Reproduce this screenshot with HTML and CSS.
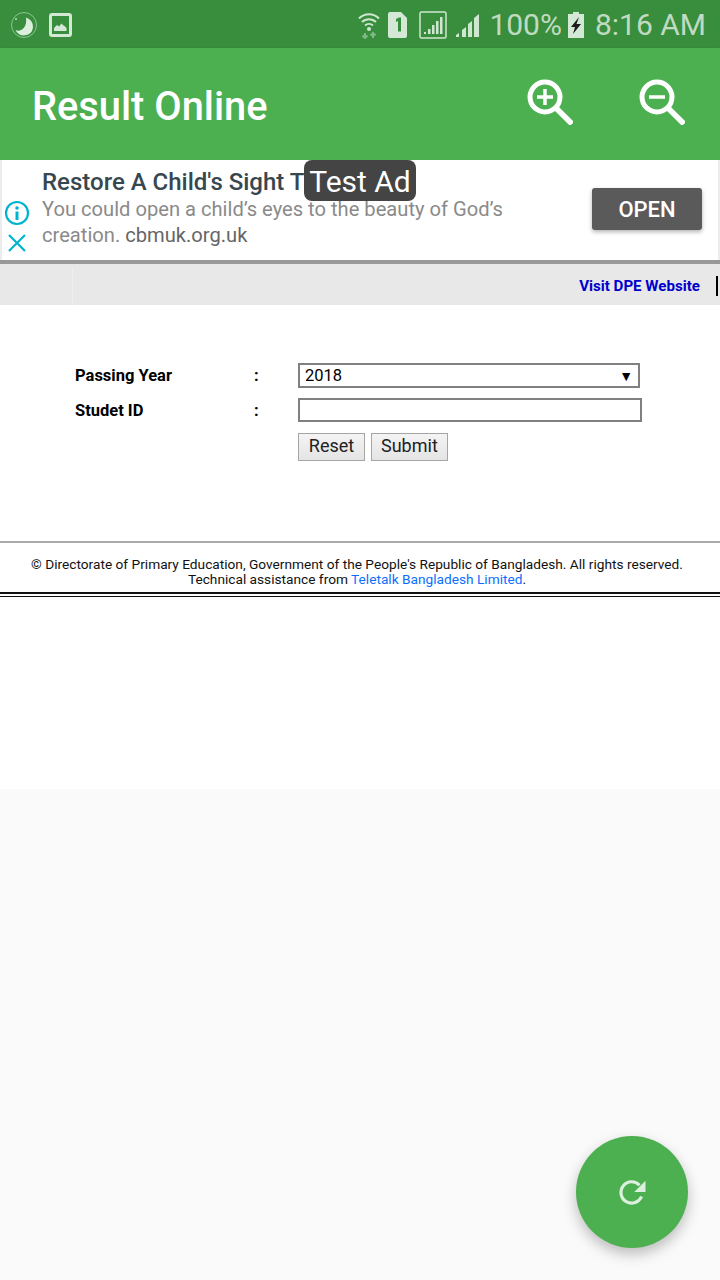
FILE: index.html
```html
<!DOCTYPE html>
<html lang="en">
<head>
    <meta charset="UTF-8">
    <meta name="viewport" content="width=device-width, initial-scale=1.0">
    <title>Result Online</title>
    <link rel="stylesheet" href="styles.css">
</head>
<body>
    <div class="status-bar">
        <div class="status-left">
            <svg class="status-icon" width="28" height="28" viewBox="0 0 28 28">
                <circle cx="14" cy="14" r="12.5" fill="none" stroke="#8fc596" stroke-width="1"/>
                <path d="M16 6.500a9.500 9.500 0 0 1 7 10 9.200 9.200 0 0 1-17.500 2.500c5 2.500 12-2 10.500-12.500z" fill="#dcefdd"/>
                <circle cx="6" cy="8" r="1" fill="#b5dab8"/>
            </svg>
            <svg class="status-icon" width="23" height="24" viewBox="0 0 23 24">
                <rect x="1.500" y="1.500" width="20" height="21" rx="1.500" fill="none" stroke="#d3e8d5" stroke-width="3"/>
                <path d="M5 18v-3l3-3 2 1.500 2.500-3 2 2 1 .5 2 2v3z" fill="#d3e8d5"/>
            </svg>
        </div>
        <div class="status-right">
            <svg width="22" height="28" viewBox="0 0 22 28">
                <path d="M1 7.500a14 14 0 0 1 20 0M4 11a10 10 0 0 1 14 0M7 14.500a6 6 0 0 1 8 0" fill="none" stroke="#cfe6d1" stroke-width="2"/>
                <circle cx="11" cy="18" r="2" fill="#cfe6d1"/>
                <path d="M7 22v5M4.500 24.500 7 27l2.500-2.500" fill="none" stroke="#7dba84" stroke-width="2"/>
                <path d="M15 27v-5M12.500 24.500 15 22l2.500 2.500" fill="none" stroke="#7dba84" stroke-width="2"/>
            </svg>
            <svg class="gap-sim" width="20" height="26" viewBox="0 0 20 26">
                <path d="M2 0h11l6 6v18a2 2 0 0 1-2 2H2a2 2 0 0 1-2-2V2a2 2 0 0 1 2-2z" fill="#d3e8d5"/>
                <path d="M8 7l3-1.500h2v14h-3V9L8 10z" fill="#388e3c"/>
            </svg>
            <svg class="gap-frame" width="28" height="28" viewBox="0 0 28 28">
                <rect x="1" y="1" width="26" height="26" rx="1.500" fill="none" stroke="#cfe6d1" stroke-width="1.500"/>
                <path d="M5 23h2v-2H5zM9 23h2.500v-5H9zM13 23h2.500v-9H13zM17 23h2.500V10H17zM21 23h2.500V6H21z" fill="#cfe6d1"/>
            </svg>
            <svg class="gap-signal" width="24" height="24" viewBox="0 0 24 24">
                <path d="M0 24v-2l3-2v4zM6 24v-7l4-3v10zM12 24V11l4-3v16zM18 24V5l5-4v23z" fill="#cfe6d1"/>
            </svg>
            <span class="status-text pct">100%</span>
            <svg class="gap-batt" width="16" height="26" viewBox="0 0 16 26">
                <path d="M5 0h6v2h5v24H0V2h5z" fill="#d3e8d5"/>
                <path d="M11 5 3 15h4l-2 7 8-10H8.500z" fill="#1c1c1c"/>
            </svg>
            <span class="status-text clock">8:16 AM</span>
        </div>
    </div>

    <div class="toolbar">
        <h1 class="toolbar-title">Result Online</h1>
        <div class="toolbar-actions">
            <svg width="48" height="48" viewBox="0 0 48 48">
                <circle cx="20" cy="20" r="15" fill="none" stroke="#fff" stroke-width="5"/>
                <path d="M31 31 47 47" stroke="#fff" stroke-width="5.500" fill="none"/>
                <path d="M20 12v16M12 20h16" stroke="#fff" stroke-width="3.500" fill="none"/>
            </svg>
            <svg width="48" height="48" viewBox="0 0 48 48">
                <circle cx="20" cy="20" r="15" fill="none" stroke="#fff" stroke-width="5"/>
                <path d="M31 31 47 47" stroke="#fff" stroke-width="5.500" fill="none"/>
                <path d="M12 20h16" stroke="#fff" stroke-width="3.500" fill="none"/>
            </svg>
        </div>
    </div>

    <div class="ad">
        <div class="ad-icons">
            <svg width="26" height="26" viewBox="0 0 26 26">
                <circle cx="13" cy="13" r="11" fill="none" stroke="#00b4d0" stroke-width="2.200"/>
                <circle cx="13" cy="8" r="1.800" fill="#00b4d0"/>
                <path d="M13 11.500V20" stroke="#00b4d0" stroke-width="3" fill="none"/>
            </svg>
            <svg width="20" height="20" viewBox="0 0 20 20">
                <path d="M2 2 18 18M18 2 2 18" stroke="#00b4d0" stroke-width="2.200" fill="none"/>
            </svg>
        </div>
        <div class="ad-copy">
            <div class="ad-title">Restore A Child's Sight T</div>
            <div class="ad-text">You could open a child’s eyes to the beauty of God’s<br>creation. <span class="ad-domain">cbmuk.org.uk</span></div>
        </div>
        <button class="ad-open" type="button">OPEN</button>
        <div class="test-badge">Test Ad</div>
    </div>

    <div class="web-content">
        <div class="visit-bar">
            <span class="visit-cell"></span>
            <a class="visit-link" href="#">Visit DPE Website</a>
            <span class="visit-sep"></span>
        </div>

        <form class="result-form">
            <label class="form-label">Passing Year</label>
            <span class="form-colon">:</span>
            <div class="fake-select"><span>2018</span><span class="select-arrow">▼</span></div>

            <label class="form-label">Studet ID</label>
            <span class="form-colon">:</span>
            <input class="form-input" type="text">

            <div class="form-buttons">
                <button class="form-btn btn-reset" type="button">Reset</button>
                <button class="form-btn" type="button">Submit</button>
            </div>
        </form>

        <div class="footer">
            <div>© Directorate of Primary Education, Government of the People's Republic of Bangladesh. All rights reserved.</div>
            <div>Technical assistance from <a class="footer-link" href="#">Teletalk Bangladesh Limited</a>.</div>
        </div>
        <div class="double-rule"></div>
    </div>

    <div class="fab">
        <svg width="36" height="36" viewBox="0 0 32 32">
            <path d="M24.500 20a9.500 9.500 0 1 1-1.800-10" fill="none" stroke="#dcf0de" stroke-width="2.800"/>
            <path d="M28 6v10H18z" fill="#dcf0de"/>
        </svg>
    </div>
</body>
</html>
```

FILE: styles.css
```css
* {
    box-sizing: border-box;
}
body {
    margin: 0;
    height: 1280px;
    overflow: hidden;
    position: relative;
    background-color: #fafafa;
    font-family: Roboto, "Liberation Sans", sans-serif;
}
.status-bar {
    height: 48px;
    background-color: #388e3c;
    display: flex;
    justify-content: space-between;
    align-items: center;
    padding: 2px 14px 0 10px;
}
.status-left, .status-right {
    display: flex;
    align-items: center;
}
.status-left {
    gap: 11px;
}
.gap-sim {
    margin-left: 8px;
}
.gap-frame {
    margin-left: 11px;
}
.gap-signal {
    margin-left: 9px;
}
.gap-batt {
    margin-left: 6px;
}
.status-text {
    color: rgba(255, 255, 255, 0.7);
    font-size: 30px;
    line-height: 46px;
}
.pct {
    margin-left: 9px;
}
.clock {
    margin-left: 11px;
}
.toolbar {
    height: 112px;
    background-color: #4caf50;
    display: flex;
    justify-content: space-between;
    align-items: center;
    padding: 0 35px 0 32px;
    box-shadow: 0 2px 4px rgba(0, 0, 0, 0.2);
    position: relative;
}
.toolbar-title {
    margin: 4px 0 0;
    color: #fff;
    font-size: 39.800px;
    font-weight: 500;
}
.toolbar-actions {
    display: flex;
    gap: 64px;
    margin-top: -6px;
}
.ad {
    height: 100px;
    background-color: #fff;
    border-left: 2px solid #ececec;
    border-right: 2px solid #ececec;
    display: flex;
    position: relative;
}
.ad-icons {
    width: 30px;
    display: flex;
    flex-direction: column;
    align-items: center;
    gap: 7px;
    padding-top: 40px;
}
.ad-copy {
    flex: 1;
    margin-left: 10px;
    padding-top: 6px;
}
.ad-title {
    color: #37474f;
    font-size: 24px;
    font-weight: 500;
    line-height: 32px;
}
.ad-text {
    margin-top: -2px;
    color: #8a8a8a;
    font-size: 20.150px;
    line-height: 26px;
}
.ad-domain {
    color: #666;
}
.ad-open {
    width: 110px;
    height: 42px;
    margin: 28px 16px 0 0;
    background-color: #5a5a5a;
    color: #fff;
    border: none;
    border-radius: 3px;
    font-family: inherit;
    font-size: 22px;
    font-weight: 500;
    box-shadow: 0 2px 4px rgba(0, 0, 0, 0.3);
}
.test-badge {
    position: absolute;
    left: 302px;
    top: 0;
    width: 112px;
    height: 41px;
    background-color: #444;
    color: #fff;
    border-radius: 8px;
    font-size: 30px;
    line-height: 43px;
    text-align: center;
}
.web-content {
    height: 529px;
    background-color: #fff;
    border-top: 4px solid #999;
}
.visit-bar {
    height: 41px;
    background-color: #e8e8e8;
    display: flex;
    justify-content: flex-end;
    align-items: center;
    padding: 3px 2px 0 0;
}
.visit-cell {
    width: 73px;
    height: 100%;
    border-right: 1px solid #eee;
    margin-right: auto;
}
.visit-link {
    color: #0000cc;
    font-size: 15.100px;
    font-weight: 700;
    text-decoration: none;
}
.visit-sep {
    width: 2px;
    height: 20px;
    background-color: #000;
    margin-left: 16px;
}
.result-form {
    display: grid;
    grid-template-columns: 179px 44px 344px;
    grid-auto-rows: min-content;
    padding: 58px 0 0 75px;
    height: 238px;
    align-items: center;
    font-size: 16.500px;
    border-bottom: 2px solid #aaa;
}
.form-label {
    font-weight: 700;
    color: #000;
    height: 35px;
    line-height: 26px;
}
.form-colon {
    height: 35px;
    line-height: 26px;
    font-weight: 700;
}
.fake-select {
    width: 342px;
    height: 25px;
    border: 2px solid #808080;
    display: flex;
    justify-content: space-between;
    align-items: center;
    padding: 0 5px 0 5px;
    margin-bottom: 10px;
}
.select-arrow {
    font-size: 14px;
}
.form-input {
    width: 344px;
    height: 24px;
    border: 2px solid #808080;
    margin-bottom: 11px;
    padding: 0;
    background: #fff;
}
.form-buttons {
    grid-column: 3;
    display: flex;
    gap: 6px;
}
.form-btn {
    height: 28px;
    padding: 0 9px 4px;
    background: linear-gradient(#f4f4f4, #e4e4e4);
    border: 1px solid #a5a5a5;
    font-family: inherit;
    font-size: 18px;
    color: #222;
}
.btn-reset {
    width: 67px;
}
.footer {
    padding: 14px 6px 0 0;
    height: 49px;
    text-align: center;
    font-size: 13.700px;
    line-height: 15px;
    color: #111;
}
.footer-link {
    color: #0d6efd;
    text-decoration: none;
}
.double-rule {
    height: 5px;
    border-top: 2px solid #111;
    border-bottom: 1px solid #111;
}
.fab {
    position: absolute;
    left: 576px;
    top: 1136px;
    width: 112px;
    height: 112px;
    border-radius: 50%;
    background-color: #4caf50;
    display: flex;
    justify-content: center;
    align-items: center;
    box-shadow: 0 6px 14px rgba(0, 0, 0, 0.25);
}
```
